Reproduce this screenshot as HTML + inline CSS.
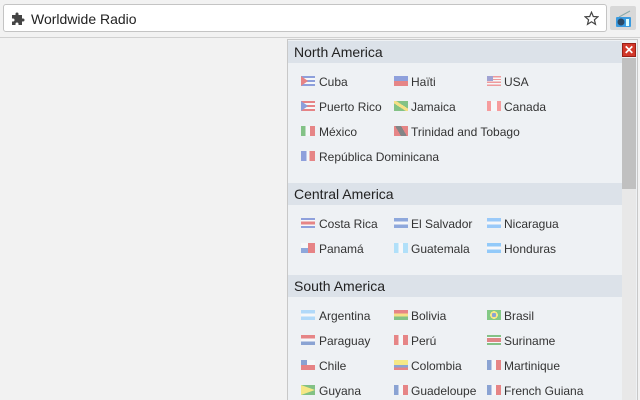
<!DOCTYPE html>
<html style="width:640px;height:400px;overflow:hidden"><head><meta charset="utf-8"><style>
*{margin:0;padding:0;box-sizing:border-box}
body{width:640px;height:400px;overflow:hidden;background:#f2f2f2;font-family:"Liberation Sans",Arial,sans-serif;position:relative}
.bar{position:absolute;left:3px;top:4px;width:604px;height:28px;background:#fff;border:1px solid #c4c4c4;border-radius:3px}
.bar .t{position:absolute;left:27px;top:6px;font-size:14px;color:#222}
.line{position:absolute;left:0;top:37px;width:640px;height:1px;background:#d0d0d0}
.ext{position:absolute;left:610px;top:6px;width:26px;height:24px;background:#d8d8d8;border-radius:2px}
.pop{position:absolute;left:287px;top:39px;width:351px;height:361px;background:#eef1f4;border:1px solid #c8c8c8;border-bottom:none}
.h{position:absolute;left:288px;width:334px;height:22px;background:#dce2e9;font-size:14px;color:#222;padding:3px 0 0 6px}
.i{position:absolute;font-size:12px;color:#333;white-space:nowrap}
.f{position:absolute;width:14px;height:10px;opacity:.45}
.sb{position:absolute;left:622px;top:58px;width:14px;height:342px;background:#e8e8e8}
.th{position:absolute;left:622px;top:58px;width:14px;height:131px;background:#c0c0c0}
.x{position:absolute;left:622px;top:43px;width:14px;height:14px;background:#d2382a;border:1px solid #9a2018;color:#fff;font-size:12px;font-weight:bold;line-height:12px;text-align:center}
</style></head><body>
<div class="bar"><svg style="position:absolute;left:8px;top:7px" width="13" height="13" viewBox="0 0 13 13"><path d="M0 3h3.5V2a1.5 1.5 0 0 1 3 0v1H10v3.5h1a1.5 1.5 0 0 1 0 3h-1V13H6.5v-1a1.5 1.5 0 0 0-3 0v1H0V9.5h1a1.5 1.5 0 0 0 0-3H0z" fill="#444"/></svg><span class="t">Worldwide Radio</span>
<svg style="position:absolute;left:580px;top:6px" width="15" height="15" viewBox="0 0 15 15"><path d="M7.5 1.2l1.8 4.3 4.6.3-3.5 3 1.1 4.5-4-2.5-4 2.5 1.1-4.5-3.5-3 4.6-.3z" fill="none" stroke="#444" stroke-width="1.2"/></svg></div>
<div class="line"></div>
<div class="ext"><svg width="26" height="24" viewBox="0 0 26 24"><line x1="9" y1="11" x2="20" y2="5" stroke="#8aa" stroke-width="1"/><rect x="6" y="11" width="15" height="10" rx="1" fill="#3a9be0"/><circle cx="11" cy="16" r="3.5" fill="#2b4a66"/><rect x="16" y="13" width="3" height="7" fill="#dff"/></svg></div>
<div class="pop"></div>
<div class="sb"></div><div class="th"></div>
<div class="x">✕</div>
<div class="h" style="top:41px">North America</div>
<div class="h" style="top:183px">Central America</div>
<div class="h" style="top:275px">South America</div>

<div class="f" style="left:301px;top:76px;background:repeating-linear-gradient(#1a3ebf 0 2px,#fff 2px 4px)"><div style="width:0;height:0;border-left:7px solid #d00;border-top:5px solid transparent;border-bottom:5px solid transparent"></div></div><span class="i" style="left:319px;top:75px">Cuba</span>
<div class="f" style="left:394px;top:76px;background:linear-gradient(#1a3ebf 50%,#d00 50%)"></div><span class="i" style="left:411px;top:75px">Haïti</span>
<div class="f" style="left:487px;top:76px;background:repeating-linear-gradient(#e33 0 1.4px,#fff 1.4px 2.8px)"><div style="width:6px;height:5px;background:#44a"></div></div><span class="i" style="left:504px;top:75px">USA</span>

<div class="f" style="left:301px;top:101px;background:repeating-linear-gradient(#d00 0 2px,#fff 2px 4px)"><div style="width:0;height:0;border-left:7px solid #1a3ebf;border-top:5px solid transparent;border-bottom:5px solid transparent"></div></div><span class="i" style="left:319px;top:100px">Puerto Rico</span>
<div class="f" style="left:394px;top:101px;background:linear-gradient(33deg,#080 40%,#fc0 40% 60%,#080 60%)"></div><span class="i" style="left:411px;top:100px">Jamaica</span>
<div class="f" style="left:487px;top:101px;background:linear-gradient(90deg,#f33 30%,#fff 30% 70%,#f33 70%)"></div><span class="i" style="left:504px;top:100px">Canada</span>

<div class="f" style="left:301px;top:126px;background:linear-gradient(90deg,#080 33%,#fff 33% 66%,#d00 66%)"></div><span class="i" style="left:319px;top:125px">México</span>
<div class="f" style="left:394px;top:126px;background:linear-gradient(60deg,#d00 35%,#000 35% 65%,#d00 65%)"></div><span class="i" style="left:411px;top:125px">Trinidad and Tobago</span>

<div class="f" style="left:301px;top:151px;background:linear-gradient(90deg,#1a3ebf 40%,#fff 40% 60%,#d00 60%)"></div><span class="i" style="left:319px;top:150px">República Dominicana</span>

<div class="f" style="left:301px;top:218px;background:linear-gradient(#1a3ebf 20%,#fff 20% 35%,#d00 35% 65%,#fff 65% 80%,#1a3ebf 80%)"></div><span class="i" style="left:319px;top:217px">Costa Rica</span>
<div class="f" style="left:394px;top:218px;background:linear-gradient(#1a4ebf 33%,#fff 33% 66%,#1a4ebf 66%)"></div><span class="i" style="left:411px;top:217px">El Salvador</span>
<div class="f" style="left:487px;top:218px;background:linear-gradient(#39f 33%,#fff 33% 66%,#39f 66%)"></div><span class="i" style="left:504px;top:217px">Nicaragua</span>
<div class="f" style="left:301px;top:243px;background:linear-gradient(90deg,#fff 50%,#d00 50%);"><div style="position:absolute;top:5px;width:7px;height:5px;background:#1a4ebf"></div></div><span class="i" style="left:319px;top:242px">Panamá</span>
<div class="f" style="left:394px;top:243px;background:linear-gradient(90deg,#6cf 33%,#fff 33% 66%,#6cf 66%)"></div><span class="i" style="left:411px;top:242px">Guatemala</span>
<div class="f" style="left:487px;top:243px;background:linear-gradient(#29f 33%,#fff 33% 66%,#29f 66%)"></div><span class="i" style="left:504px;top:242px">Honduras</span>

<div class="f" style="left:301px;top:310px;background:linear-gradient(#6bf 33%,#fff 33% 66%,#6bf 66%)"></div><span class="i" style="left:319px;top:309px">Argentina</span>
<div class="f" style="left:394px;top:310px;background:linear-gradient(#d00 33%,#fc0 33% 66%,#080 66%)"></div><span class="i" style="left:411px;top:309px">Bolivia</span>
<div class="f" style="left:487px;top:310px;background:radial-gradient(circle,#14a 25%,#fd0 26% 45%,#090 46%)"></div><span class="i" style="left:504px;top:309px">Brasil</span>
<div class="f" style="left:301px;top:335px;background:linear-gradient(#d00 33%,#fff 33% 66%,#14a 66%)"></div><span class="i" style="left:319px;top:334px">Paraguay</span>
<div class="f" style="left:394px;top:335px;background:linear-gradient(90deg,#d00 33%,#fff 33% 66%,#d00 66%)"></div><span class="i" style="left:411px;top:334px">Perú</span>
<div class="f" style="left:487px;top:335px;background:linear-gradient(#080 20%,#fff 20% 28%,#c00 28% 72%,#fff 72% 80%,#080 80%)"></div><span class="i" style="left:504px;top:334px">Suriname</span>
<div class="f" style="left:301px;top:360px;background:linear-gradient(#fff 50%,#d00 50%)"><div style="width:6px;height:5px;background:#14a"></div></div><span class="i" style="left:319px;top:359px">Chile</span>
<div class="f" style="left:394px;top:360px;background:linear-gradient(#fd0 50%,#14a 50% 75%,#d00 75%)"></div><span class="i" style="left:411px;top:359px">Colombia</span>
<div class="f" style="left:487px;top:360px;background:linear-gradient(90deg,#14a 33%,#fff 33% 66%,#d00 66%)"></div><span class="i" style="left:504px;top:359px">Martinique</span>
<div class="f" style="left:301px;top:385px;background:#080"><div style="width:0;height:0;border-left:14px solid #fd0;border-top:5px solid transparent;border-bottom:5px solid transparent"></div></div><span class="i" style="left:319px;top:384px">Guyana</span>
<div class="f" style="left:394px;top:385px;background:linear-gradient(90deg,#14a 33%,#fff 33% 66%,#d00 66%)"></div><span class="i" style="left:411px;top:384px">Guadeloupe</span>
<div class="f" style="left:487px;top:385px;background:linear-gradient(90deg,#14a 33%,#fff 33% 66%,#d00 66%)"></div><span class="i" style="left:504px;top:384px">French Guiana</span>
</body></html>
